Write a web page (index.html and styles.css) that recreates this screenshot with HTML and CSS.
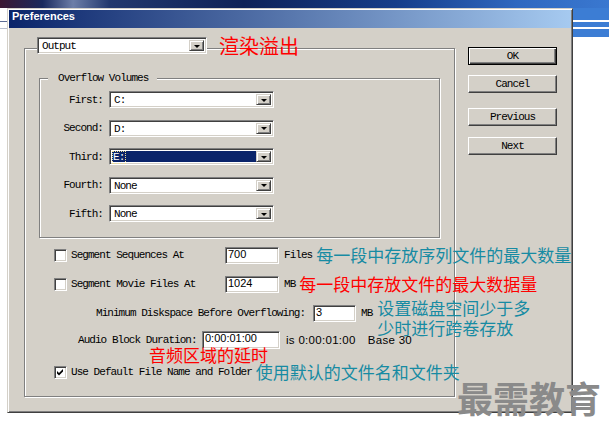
FILE: index.html
```html
<!DOCTYPE html>
<html lang="zh-CN">
<head>
  <meta charset="UTF-8" />
  <title>Preferences</title>
  <link rel="stylesheet" href="styles.css">
</head>
<body>
  <div class="dialog">
    <div class="titlebar">Preferences</div>
    <div class="dialog-body">
      <div class="group outer">
        <div class="group-head">
          <div class="combo output"><span class="combo-value">Output</span><span class="combo-btn"></span></div>
          <span class="note red big">渲染溢出</span>
        </div>

        <div class="group inner">
          <div class="group-title">Overflow Volumes</div>
          <div class="volume-grid">
            <span class="vol-label">First:</span>
            <div class="combo"><span class="combo-value">C:</span><span class="combo-btn"></span></div>
            <span class="vol-label">Second:</span>
            <div class="combo"><span class="combo-value">D:</span><span class="combo-btn"></span></div>
            <span class="vol-label">Third:</span>
            <div class="combo selected"><span class="combo-value"><span class="focus">E:</span></span><span class="combo-btn"></span></div>
            <span class="vol-label">Fourth:</span>
            <div class="combo"><span class="combo-value">None</span><span class="combo-btn"></span></div>
            <span class="vol-label">Fifth:</span>
            <div class="combo"><span class="combo-value">None</span><span class="combo-btn"></span></div>
          </div>
        </div>

        <div class="opt-row seg-seq">
          <span class="check"></span>
          <span class="opt-label seg-label">Segment Sequences At</span>
          <span class="field seg-field">700</span>
          <span class="unit">Files</span>
          <span class="note teal">每一段中存放序列文件的最大数量</span>
        </div>
        <div class="opt-row seg-movie">
          <span class="check"></span>
          <span class="opt-label seg-label">Segment Movie Files At</span>
          <span class="field seg-field">1024</span>
          <span class="unit">MB</span>
          <span class="note red">每一段中存放文件的最大数据量</span>
        </div>
        <div class="opt-row disk">
          <span class="opt-label disk-label">Minimum Diskspace Before Overflowing:</span>
          <span class="field disk-field">3</span>
          <span class="unit">MB</span>
          <span class="note teal two-line">设置磁盘空间少于多<br>少时进行跨卷存放</span>
        </div>
        <div class="opt-row audio">
          <span class="opt-label audio-label">Audio Block Duration:</span>
          <span class="field audio-field">0:00:01:00</span>
          <span class="audio-info">is 0:00:01:00</span>
          <span class="audio-info base">Base 30</span>
        </div>
        <div class="note red audio-note">音频区域的延时</div>
        <div class="opt-row default-name">
          <span class="check checked">
            <svg width="7" height="7" viewBox="0 0 7 7"><polygon points="0,2 2,4 6,0 6,2.6 2,6.6 0,4.6" fill="#000"/></svg>
          </span>
          <span class="opt-label">Use Default File Name and Folder</span>
          <span class="note teal">使用默认的文件名和文件夹</span>
        </div>
      </div>

      <div class="buttons">
        <div class="btn default">OK</div>
        <div class="btn cancel">Cancel</div>
        <div class="btn previous">Previous</div>
        <div class="btn next">Next</div>
      </div>
    </div>
  </div>

  <div class="watermark">最需教育</div>
</body>
</html>
```

FILE: styles.css
```css
* {
  box-sizing: border-box;
}

html, body {
  margin: 0;
  height: 100%;
}

body {
  overflow: hidden;
  font-family: "Liberation Mono", "DejaVu Sans Mono", monospace;
  font-size: 11px;
  letter-spacing: -0.95px;
  color: #000;
  background:
    linear-gradient(#fff 0 13px, #5b6b95 13px 14px, #fff 14px 20px, #b8bfd0 20px 21px, #fff 21px) 0 8px / 7px 29px no-repeat,
    linear-gradient(to right, #3b1732 0, #1a2a5e 7%, #6d7ea8 12%, #22386e 18%, #0e2258 40%, #163d8a 65%, #2f68c0 85%, #3a78d0 100%) 0 0 / 100% 8px no-repeat,
    linear-gradient(#3c7dd4 0 20px, #fff 20px 22px, #3c7dd4 22px 27px, #fff 27px 29px, #3c7dd4 29px) 0 0 / 100% 37px no-repeat,
    #fff;
}

/* window */
.dialog {
  width: 566px;
  height: 405px;
  margin: 8px 0 0 7px;
  padding: 1px;
  display: flex;
  flex-direction: column;
  background: #d4d0c8;
  border: 1px solid;
  border-color: #d4d0c8 #404040 #404040 #d4d0c8;
  box-shadow: inset 1px 1px #fff, inset -1px -1px #808080;
}

.titlebar {
  height: 18px;
  padding-left: 3px;
  line-height: 18px;
  font: bold 11px "Liberation Sans", Arial, sans-serif;
  letter-spacing: 0;
  color: #fff;
  background: linear-gradient(to right, #0a246a, #a6caf0);
}

.dialog-body {
  display: flex;
  align-items: flex-start;
  padding-left: 15px;
}

/* group boxes */
.group {
  display: flex;
  flex-direction: column;
  border: 1px solid #808080;
  box-shadow: inset 1px 1px #fff, 1px 1px #fff;
}

.group.outer {
  flex-shrink: 0;
  width: 431px;
  height: 349px;
  margin-top: 20px;
}

.group-head {
  display: flex;
  align-items: center;
  height: 17px;
  margin: -12px 0 0 12px;
}

.group.inner {
  width: 401px;
  margin: 24px 0 0 14px;
  padding-bottom: 15px;
}

.group-title {
  align-self: flex-start;
  margin: -7px 0 0 8px;
  padding: 0 9px 0 10px;
  line-height: 13px;
  background: #d4d0c8;
}

.volume-grid {
  display: grid;
  grid-template-columns: 63px 165px;
  grid-auto-rows: 17px;
  column-gap: 6px;
  row-gap: 11.5px;
  align-items: center;
  margin-top: 6px;
}

.vol-label {
  text-align: right;
}

/* combo box */
.combo {
  display: flex;
  flex-shrink: 0;
  height: 17px;
  padding: 2px;
  background: #fff;
  border: 1px solid;
  border-color: #808080 #fff #fff #808080;
  box-shadow: inset 1px 1px #404040, inset -1px -1px #d4d0c8;
}

.combo.output {
  width: 170px;
}

.combo-value {
  flex: 1;
  padding-left: 2px;
  line-height: 13px;
}

.combo.selected .combo-value {
  background: #0a246a;
  color: #fff;
}

.focus {
  display: inline-block;
  height: 13px;
  padding: 0 2px 0 1px;
  margin-left: -2px;
  outline: 1px dotted #f2e090;
  outline-offset: -1px;
}

.combo-btn {
  width: 15px;
  display: flex;
  align-items: center;
  justify-content: center;
  background: #d4d0c8;
  border: 1px solid;
  border-color: #d4d0c8 #404040 #404040 #d4d0c8;
  box-shadow: inset 1px 1px #fff, inset -1px -1px #808080;
}

.combo-btn::after {
  content: "";
  border-top: 3px solid #000;
  border-left: 3px solid transparent;
  border-right: 3px solid transparent;
  margin-top: 1px;
}

/* option rows */
.opt-row {
  display: flex;
  align-items: center;
  height: 18px;
  white-space: nowrap;
}

.opt-row > * {
  flex-shrink: 0;
}

.seg-seq {
  margin-top: 8px;
}

.seg-movie,
.disk {
  margin-top: 11px;
}

.audio {
  margin-top: 9px;
}

.default-name {
  margin-top: -1px;
}

.check {
  width: 13px;
  height: 13px;
  margin: 0 4px 0 29px;
  display: flex;
  align-items: center;
  justify-content: center;
  background: #fff;
  border: 1px solid;
  border-color: #808080 #fff #fff #808080;
  box-shadow: inset 1px 1px #404040, inset -1px -1px #d4d0c8;
}

.seg-label {
  width: 154px;
}

.disk-label {
  width: 217px;
  margin-left: 71px;
}

.audio-label {
  width: 124px;
  margin-left: 53px;
}

.field {
  height: 17px;
  padding: 0 2px;
  line-height: 15px;
  font: 11px "Liberation Sans", Arial, sans-serif;
  letter-spacing: 0;
  background: #fff;
  border: 1px solid;
  border-color: #808080 #fff #fff #808080;
  box-shadow: inset 1px 1px #404040, inset -1px -1px #d4d0c8;
}

.seg-field {
  width: 54px;
}

.disk-field {
  width: 43px;
}

.audio-field {
  width: 78px;
  height: 18px;
}

.unit {
  margin-left: 5px;
}

.audio-info {
  margin-left: 6px;
  font: 11.5px "Liberation Sans", Arial, sans-serif;
  letter-spacing: 0.3px;
}

.audio-info.base {
  margin-left: 12px;
}

/* annotations */
.note {
  margin-left: 4px;
  font-family: "Noto Sans CJK SC", sans-serif;
  font-size: 17px;
  line-height: 20px;
  letter-spacing: 0;
  white-space: nowrap;
}

.teal {
  color: #178ba3;
}

.red {
  color: #f00;
}

.note.big {
  margin-left: 12px;
  font-size: 20px;
  line-height: 17px;
}

.note.two-line {
  margin: 10px 0 0 5px;
}

.audio-note {
  height: 18px;
  margin: -3px 0 0 124px;
  line-height: 18px;
}

/* buttons */
.buttons {
  width: 89px;
  margin: 19px 0 0 13px;
  display: flex;
  flex-direction: column;
}

.btn {
  height: 18px;
  display: flex;
  align-items: center;
  justify-content: center;
  background: #d4d0c8;
  border: 1px solid;
  border-color: #fff #404040 #404040 #fff;
  box-shadow: inset -1px -1px #808080;
}

.btn.default {
  border-color: #000;
  box-shadow: inset 1px 1px #fff, inset -1px -1px #404040, inset -2px -2px #808080;
}

.btn.cancel {
  margin-top: 10px;
}

.btn.previous {
  margin-top: 15px;
}

.btn.next {
  margin-top: 11px;
}

.watermark {
  position: absolute;
  left: 457px;
  top: 377px;
  font-family: "Noto Sans CJK SC", sans-serif;
  font-weight: bold;
  font-size: 36px;
  line-height: 40px;
  letter-spacing: 0;
  color: #8a8a8a;
}
```
